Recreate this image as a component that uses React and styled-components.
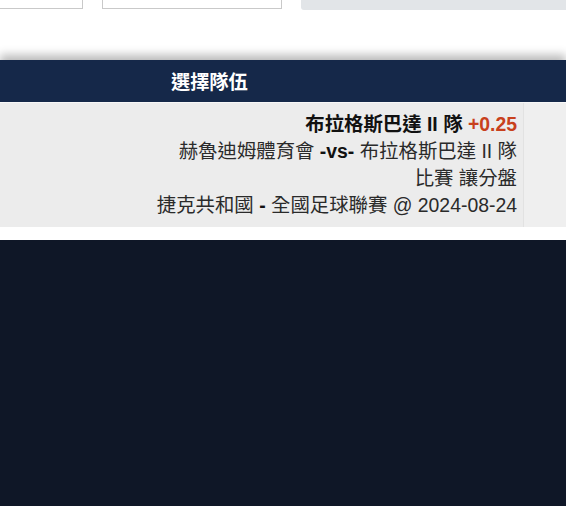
import React from 'react'
import styled, { createGlobalStyle } from 'styled-components';

const GlobalStyle = createGlobalStyle`
  html, body {
    margin: 0;
    padding: 0;
    background: #fff;
    font-family: "Liberation Sans", Arial, "Noto Sans CJK TC", sans-serif;
    overflow: hidden;
  }
`;

const App = () => {
  return (
    <Page>
      <GlobalStyle />
      <Toolbar>
        <Field $width={121} />
        <Field $width={180} />
        <Panel />
      </Toolbar>
      <Table>
        <HeadRow>
          <HeadCell>選擇隊伍</HeadCell>
          <HeadCell />
        </HeadRow>
        <BodyRow>
          <InfoCell>
            <Line><b>布拉格斯巴達 II 隊 <Odds>+0.25</Odds></b></Line>
            <Line>赫魯迪姆體育會 <b>-vs-</b> 布拉格斯巴達 II 隊</Line>
            <Line>比賽 讓分盤</Line>
            <Line>捷克共和國 <b>-</b> 全國足球聯賽 @ 2024-08-24</Line>
          </InfoCell>
          <SideCell />
        </BodyRow>
      </Table>
      <Footer />
    </Page>
  )
}

const Page = styled.div`
  width: 566px;
  height: 506px;
  display: flex;
  flex-direction: column;
  overflow: hidden;
`;

const Toolbar = styled.div`
  display: flex;
  align-items: flex-end;
  gap: 19px;
  margin-top: -31px;
  margin-left: -38px;
  height: 41px;
  flex-shrink: 0;
`;

const Field = styled.div`
  width: ${({ $width }) => $width}px;
  height: 38px;
  box-sizing: border-box;
  border: 1px solid #c9c9c9;
  background: #fff;
  margin-bottom: 1px;
`;

const Panel = styled.div`
  flex: 1;
  height: 41px;
  background: #e2e5e8;
  border-radius: 0 0 0 3px;
`;

const Table = styled.div`
  margin-top: 50px;
  display: flex;
  flex-direction: column;
  flex-shrink: 0;
`;

const HeadRow = styled.div`
  display: grid;
  grid-template-columns: 523px 1fr;
  height: 42px;
  background: #152849;
  box-shadow: 0 -5px 9px rgba(0, 0, 0, 0.28);
`;

const HeadCell = styled.div`
  display: flex;
  align-items: center;
  padding-left: 171px;
  color: #fff;
  font-family: "Noto Sans CJK TC", sans-serif;
  font-weight: 700;
  font-size: 19.2px;
`;

const BodyRow = styled.div`
  display: grid;
  grid-template-columns: 523px 1fr;
  margin-top: 1px;
`;

const InfoCell = styled.div`
  background: #ececec;
  padding: 8px 6px 8px 0;
  text-align: right;
  color: #2a2a2a;
  font-size: 19.4px;
  line-height: 27px;
`;

const Line = styled.div`
  white-space: nowrap;
  b { font-weight: 700; color: #111; }
`;

const Odds = styled.span`
  color: #c8401c;
`;

const SideCell = styled.div`
  background: #efefef;
  border-left: 1px solid #e2e2e2;
`;

const Footer = styled.div`
  margin-top: 13px;
  flex: 1;
  background: #0f1727;
`;

export default App
